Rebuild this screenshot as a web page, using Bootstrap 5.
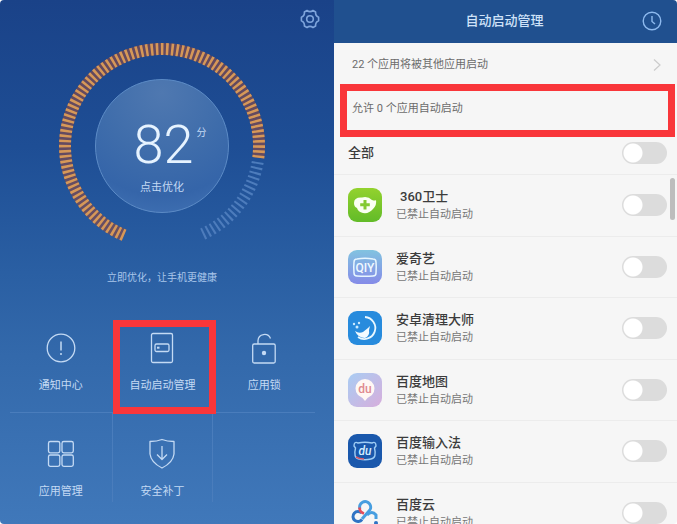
<!DOCTYPE html>
<html lang="zh-CN">
<head>
<meta charset="utf-8">
<meta name="viewport" content="width=device-width, initial-scale=1">
<title>自动启动管理</title>
<link href="https://cdn.jsdelivr.net/npm/bootstrap@5.3.0/dist/css/bootstrap.min.css" rel="stylesheet">
<style>
  body { font-family: Roboto, "Noto Sans CJK SC", sans-serif; font-size: 11px; line-height: 16px; background: #fff; }
  .screens { height: 100vh; border-radius: 4px; }
  .home { flex: 334 1 0; background: linear-gradient(#1a4288, #1e4e95 28%, #2a5fa3 52%, #3369ab 68%, #4078ba); color: #c4daf4; }
  .manager { flex: 343 1 0; background: #f6f6f6; color: #6b6b6b; }
  .manager > * { flex-shrink: 0; }
  .plain { background: none; border: 0; padding: 0; color: inherit; line-height: 1; }
  .home-bar { height: 43px; padding: 0 14px 5px; color: #7fa5dc; }
  .gauge { display: grid; width: 206px; margin-right: 10px; }
  .gauge > * { grid-area: 1 / 1; }
  .score-btn { width: 134px; height: 134px; border: 1px solid #5c8bc6; border-radius: 50%; color: #c4daf4; padding: 30px 0 0;
    background: radial-gradient(circle at 50% 10%, #4f78b0, #3f6dab 45%, #3565a9 75%, #4374b6); }
  .score { font-size: 54px; line-height: 70px; font-weight: 300; color: #e6f3ff; }
  .unit { font-size: 10px; line-height: 16px; margin: 15px 0 0 3px; width: 10px; }
  .tip { font-size: 10px; margin: 21px 10px 0 0; color: #a9c6ea; }
  .tools { margin: 34px 19px 0 10px; }
  .tool { height: 92px; color: #c4daf4; text-decoration: none; gap: 14px; }
  .tools .lower { height: 72px; margin-top: 17px; }
  .cell { border-color: #4a7dbc; border-style: solid; border-width: 0; }
  .cell.top { border-bottom-width: 1px; }
  .cell.split { border-left-width: 1px; border-right-width: 1px; }
  .callout { border: 7px solid #f9363a; pointer-events: none; }
  .callout-tool { inset: 0 -3px -2px 1px; }
  .callout-row { inset: -3px 2px 0 6px; }
  .title-bar { height: 43px; background: #20508f; color: #cfe2f8; padding: 0 15px 2px; }
  .title-bar h1 { font-size: 13px; line-height: 20px; padding-left: 18px; }
  .info-row { height: 44px; padding: 0 16px 0 18px; color: #6b6b6b; text-decoration: none; }
  .allow-row { height: 50px; padding: 0 18px 7px; }
  .all-row { height: 38px; padding: 0 10px 6px 14px; border-bottom: 1px solid #ececec; }
  .name { font-size: 13px; line-height: 20px; font-weight: 500; color: #3c3c3c; }
  .apps { display: grid; grid-auto-rows: 1fr; min-height: 369px; }
  .app-row { padding: 0 10px 0 14px; gap: 14px; border-bottom: 1px solid #ececec; }
  .app-row svg { width: 34px; height: 34px; flex: none; }
  .state { font-size: 11px; line-height: 16px; color: #777; }
  .form-check.form-switch { padding: 0; margin: 0; min-height: 0; }
  .form-switch .form-check-input { float: none; display: block; width: 45px; height: 22px; margin: 0; border: 0; border-radius: 11px;
    background: radial-gradient(circle at 11px 11px, #fff 9px, #dcdcdc 10px); }
  .form-switch .form-check-input:checked { background: radial-gradient(circle at 34px 11px, #fff 9px, #3b78c0 10px); }
  .thumb { top: 3px; right: 2px; width: 5px; height: 42px; border-radius: 3px; background: #bdbdbd; }
  svg text { font-family: Roboto, sans-serif; font-weight: 500; }
</style>
</head>
<body>
<div class="screens d-flex overflow-hidden">
  <section class="home d-flex flex-column overflow-hidden">
    <header class="home-bar d-flex justify-content-end align-items-center">
      <button class="plain" type="button" aria-label="设置">
        <svg width="20" height="20" viewBox="0 0 20 20" fill="none" stroke="currentColor" stroke-width="1.6" stroke-linejoin="round"><path d="M7 1.500Q10 3.800 13 1.500L15.600 3Q15.200 6.700 18.600 8.300V11.700Q15.200 13.300 15.600 17L13 18.500Q10 16.200 7 18.500L4.400 17Q4.800 13.300 1.400 11.700V8.300Q4.800 6.700 4.400 3Z"/><circle cx="10" cy="10" r="3.300"/></svg>
      </button>
    </header>
    <div class="gauge align-self-center align-items-center">
      <svg width="206" height="206" viewBox="0 0 206 206" fill="none" stroke-width="12">
        <path d="M65.100 192.300A97 97 0 1 1 199.300 114.800" stroke="#8a4a45" stroke-opacity=".65"/>
        <path d="M65.100 192.300A97 97 0 1 1 199.300 114.800" stroke="#d69858" pathLength="254" stroke-dasharray="1.5 1.506"/>
        <path d="M198.700 119A97 97 0 0 1 140.900 192.300" stroke="#4d7cbc" pathLength="57" stroke-dasharray="1.2 1.800"/>
      </svg>
      <button class="score-btn d-flex flex-column align-items-center mx-auto" type="button">
        <span class="d-flex ps-3"><span class="score">82</span><span class="unit">分</span></span>
        <span>点击优化</span>
      </button>
    </div>
    <p class="tip text-center mb-0">立即优化，让手机更健康</p>
    <nav class="tools row g-0 row-cols-3">
      <div class="col cell top"><a href="#" class="tool d-flex flex-column align-items-center pt-2">
        <svg class="mt-1" width="30" height="32" viewBox="0 0 30 32" fill="none" stroke="currentColor" stroke-width="1.3"><circle cx="15" cy="16" r="13.800"/><path d="M15 9.500V18.500M15 21V23" stroke-width="1.500"/></svg>
        <span>通知中心</span></a></div>
      <div class="col cell top position-relative"><a href="#" class="tool d-flex flex-column align-items-center pt-2">
        <svg class="mt-1" width="30" height="32" viewBox="0 0 30 32" fill="none" stroke="currentColor" stroke-width="1.3"><rect x="4.500" y="1.500" width="21" height="29" rx="1.500"/><rect x="8" y="12" width="14" height="7.500" rx="1.500"/><path d="M10 15.700H12.500" stroke-width="2"/></svg>
        <span>自动启动管理</span></a><div class="callout callout-tool position-absolute"></div></div>
      <div class="col cell top"><a href="#" class="tool d-flex flex-column align-items-center pt-2">
        <svg class="mt-1" width="30" height="32" viewBox="0 0 30 32" fill="none" stroke="currentColor" stroke-width="1.3"><rect x="3.700" y="12" width="22.500" height="19" rx="1.500"/><path d="M9 12V8.500A6.500 6.500 0 0 1 21.500 6.500"/><circle cx="15" cy="21" r="2.200" fill="currentColor" stroke="none"/></svg>
        <span>应用锁</span></a></div>
      <div class="col cell"><a href="#" class="tool lower d-flex flex-column align-items-center pt-2">
        <svg width="30" height="32" viewBox="0 0 30 32" fill="none" stroke="currentColor" stroke-width="1.3"><rect x="2.500" y="3.500" width="11.300" height="11.300" rx="1.800"/><rect x="16" y="3.500" width="11.300" height="11.300" rx="1.800"/><rect x="2.500" y="17" width="11.300" height="11.300" rx="1.800"/><rect x="16" y="17" width="11.300" height="11.300" rx="1.800"/></svg>
        <span>应用管理</span></a></div>
      <div class="col cell split"><a href="#" class="tool lower d-flex flex-column align-items-center pt-2">
        <svg width="30" height="32" viewBox="0 0 30 32" fill="none" stroke="currentColor" stroke-width="1.3" stroke-linejoin="round"><path d="M15 1.500Q20 3.500 27 3.500V16Q26 24.500 15 30Q4 24.500 3 16V3.500Q10 3.500 15 1.500ZM15 8V21.500M10 16.500L15 21.500L20 16.500"/></svg>
        <span>安全补丁</span></a></div>
      <div class="col"></div>
    </nav>
  </section>

  <section class="manager d-flex flex-column overflow-hidden">
    <header class="title-bar d-flex align-items-center">
      <h1 class="mb-0 flex-fill text-center fw-medium">自动启动管理</h1>
      <button class="plain" type="button" aria-label="记录">
        <svg width="20" height="20" viewBox="0 0 20 20" fill="none" stroke="#8db9ee" stroke-width="1.4"><circle cx="10" cy="10" r="8.800"/><path d="M10 5V10.500L13 13"/></svg>
      </button>
    </header>
    <a href="#" class="info-row d-flex align-items-center justify-content-between">
      <span>22 个应用将被其他应用启动</span>
      <svg width="8" height="14" viewBox="0 0 8 14" fill="none" stroke="#ccc" stroke-width="1.2"><path d="M1 1.500L7 7L1 12.500"/></svg>
    </a>
    <div class="allow-row d-flex align-items-center position-relative">
      <span>允许 0 个应用自动启动</span>
      <div class="callout callout-row position-absolute"></div>
    </div>
    <div class="all-row d-flex align-items-center justify-content-between">
      <label class="name" for="s0">全部</label>
      <div class="form-check form-switch"><input class="form-check-input" type="checkbox" role="switch" id="s0"></div>
    </div>
    <div class="position-relative">
      <div class="apps">
        <div class="app-row d-flex align-items-center">
          <svg viewBox="0 0 34 34"><defs><linearGradient id="g1" x2="0" y2="1"><stop stop-color="#93d22e"/><stop offset="1" stop-color="#62bb28"/></linearGradient></defs><rect width="34" height="34" rx="9" fill="url(#g1)"/><path d="M6 15Q6 9 14 9.500Q20 8 24 12Q27 13 28 12Q29 17 25 21Q21 26 15 25Q10 24 9 20Q6 19 6 15Z" fill="#fafff2"/><path d="M17 12V21.500M12.200 16.800H21.800" stroke="#83ca31" stroke-width="3"/></svg>
          <div class="flex-fill"><label class="name d-block ps-1" for="s1">360卫士</label><div class="state">已禁止自动启动</div></div>
          <div class="form-check form-switch"><input class="form-check-input" type="checkbox" role="switch" id="s1"></div>
        </div>
        <div class="app-row d-flex align-items-center">
          <svg viewBox="0 0 34 34"><defs><linearGradient id="g2" x2="0" y2="1"><stop stop-color="#82c3e0"/><stop offset="1" stop-color="#858be8"/></linearGradient></defs><rect width="34" height="34" rx="9" fill="url(#g2)"/><path d="M9 9Q17 7.500 25 9Q28 9 28 12Q28.500 17 28 23Q28 26 25 26Q17 26.500 9 26Q6 26 6 23Q5.500 17 6 12Q6 9 9 9Z" fill="none" stroke="#e7f6ff" stroke-width="1.500"/><text x="17" y="22" text-anchor="middle" font-size="12" fill="#f0faff">QIY</text></svg>
          <div class="flex-fill"><label class="name d-block" for="s2">爱奇艺</label><div class="state">已禁止自动启动</div></div>
          <div class="form-check form-switch"><input class="form-check-input" type="checkbox" role="switch" id="s2"></div>
        </div>
        <div class="app-row d-flex align-items-center">
          <svg viewBox="0 0 34 34"><rect width="34" height="34" rx="9" fill="#278bdd"/><path d="M17 6A11 11 0 1 1 10 26" fill="none" stroke="#eaf8ff" stroke-width="1.800"/><path d="M7 20Q11 23 15 21L20 17L22 15L21 19Q22 25 17 27Q10 27 7 20Z" fill="#f4fbff"/><circle cx="6" cy="13" r="1.200" fill="#c9ebff"/><circle cx="11" cy="12" r="1.200" fill="#c9ebff"/><circle cx="9" cy="16" r="1.500" fill="#c9ebff"/></svg>
          <div class="flex-fill"><label class="name d-block" for="s3">安卓清理大师</label><div class="state">已禁止自动启动</div></div>
          <div class="form-check form-switch"><input class="form-check-input" type="checkbox" role="switch" id="s3"></div>
        </div>
        <div class="app-row d-flex align-items-center">
          <svg viewBox="0 0 34 34"><defs><linearGradient id="g4" x2="1" y2="1"><stop stop-color="#a9cdf3"/><stop offset="1" stop-color="#d7aedc"/></linearGradient></defs><rect width="34" height="34" rx="9" fill="url(#g4)"/><path d="M17 28Q14 24 10 22A9.500 9.500 0 1 1 24 22Q20 24 17 28Z" fill="#fff8f4"/><text x="17" y="19.500" text-anchor="middle" font-size="12" fill="#e08a90">du</text></svg>
          <div class="flex-fill"><label class="name d-block" for="s4">百度地图</label><div class="state">已禁止自动启动</div></div>
          <div class="form-check form-switch"><input class="form-check-input" type="checkbox" role="switch" id="s4"></div>
        </div>
        <div class="app-row d-flex align-items-center">
          <svg viewBox="0 0 34 34"><rect width="34" height="34" rx="9" fill="#1a58ac"/><path d="M10 9Q17 7.500 24 9Q28 7 28 12L26.500 14Q29 24 23 25Q17 26.500 11 25Q5 24 7.500 14L6 12Q6 7 10 9Z" fill="none" stroke="#9fcdf5" stroke-width="1.400"/><path d="M8 23Q11 25 16 25" fill="none" stroke="#d85a68" stroke-width="1.600"/><text x="17" y="21" text-anchor="middle" font-size="12" font-style="italic" fill="#d5edff">du</text></svg>
          <div class="flex-fill"><label class="name d-block" for="s5">百度输入法</label><div class="state">已禁止自动启动</div></div>
          <div class="form-check form-switch"><input class="form-check-input" type="checkbox" role="switch" id="s5"></div>
        </div>
        <div class="app-row d-flex align-items-center">
          <svg viewBox="0 0 34 34" fill="none"><path d="M12 13A5.500 5.500 0 1 1 21 15L14 23" stroke="#479ee0" stroke-width="3"/><path d="M13.500 17A5 5 0 1 0 14 23.500" stroke="#2f73c4" stroke-width="3"/><path d="M11.500 11.500Q11.500 16 16 17.500" stroke="#e34d5b" stroke-width="2.600"/><path d="M19 19Q24 14 28 19V23" stroke="#479ee0" stroke-width="3"/><circle cx="28" cy="27" r="2" fill="#2f73c4"/></svg>
          <div class="flex-fill"><label class="name d-block" for="s6">百度云</label><div class="state">已禁止自动启动</div></div>
          <div class="form-check form-switch"><input class="form-check-input" type="checkbox" role="switch" id="s6"></div>
        </div>
      </div>
      <div class="thumb position-absolute"></div>
    </div>
  </section>
</div>
<script src="https://cdn.jsdelivr.net/npm/bootstrap@5.3.0/dist/js/bootstrap.bundle.min.js"></script>
</body>
</html>
